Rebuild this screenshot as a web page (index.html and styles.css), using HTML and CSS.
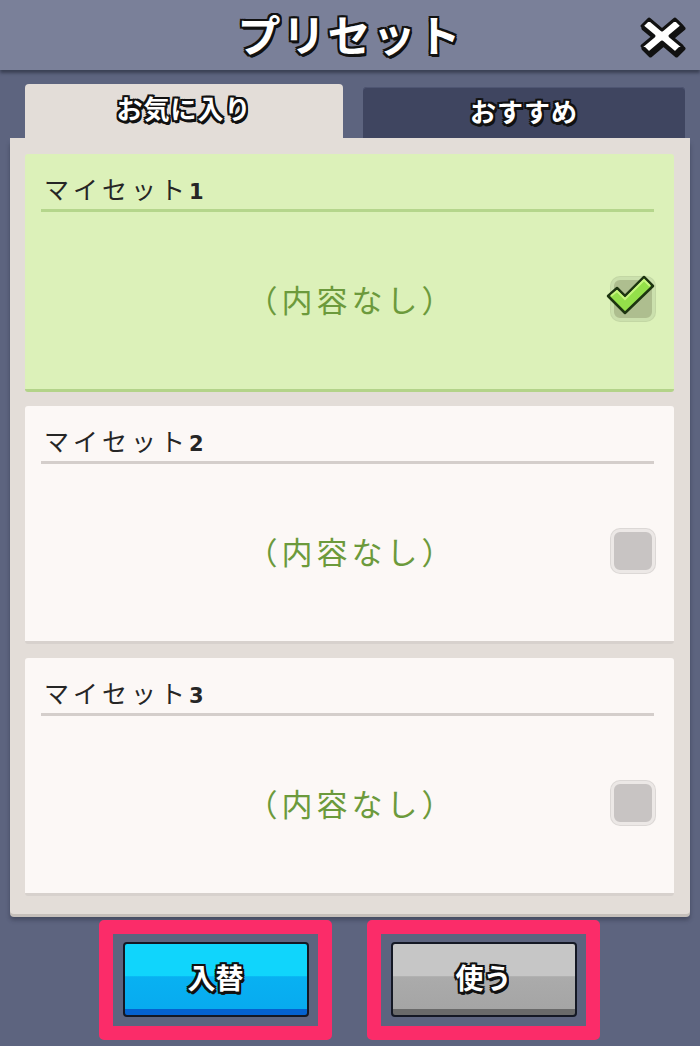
FILE: index.html
```html
<!DOCTYPE html>
<html lang="ja">
<head>
  <meta charset="UTF-8">
  <title>プリセット</title>
  <link rel="stylesheet" href="styles.css">
</head>
<body>

  <header class="topbar">
    <h1 class="outlined">プリセット</h1>
    <button class="close" aria-label="閉じる">
      <svg viewBox="0 0 48 44" width="48" height="44">
        <path d="M11 5 L24 16 L37 5 L44 12 L32 22 L44 32 L37 39 L24 28 L11 39 L4 32 L16 22 L4 12 Z"
              fill="#111" stroke="#111" stroke-width="4" stroke-linejoin="round" transform="translate(1.5 2.5)"/>
        <path d="M11 5 L24 16 L37 5 L44 12 L32 22 L44 32 L37 39 L24 28 L11 39 L4 32 L16 22 L4 12 Z"
              fill="#fff" stroke="#111" stroke-width="3" stroke-linejoin="round"/>
      </svg>
    </button>
  </header>

  <main class="sheet">
    <div class="tabs">
      <div class="tab active"><span class="outlined">お気に入り</span></div>
      <div class="tab"><span class="outlined">おすすめ</span></div>
    </div>

    <div class="panel">
      <section class="preset selected">
        <h2>マイセット<b>1</b></h2>
        <div class="preset-body">
          <p class="empty">（内容なし）</p>
          <span class="check on">
            <svg viewBox="0 0 50 42" width="50" height="42">
              <path d="M3 22 L12 14 L20 22 L39 3 L48 12 L20 39 Z" fill="#94e04a" stroke="#1d3510" stroke-width="2.5" stroke-linejoin="round"/>
              <path d="M6 22 L12 17 L20 25 L39 6 L45 12" fill="none" stroke="#c6f57e" stroke-width="2"/>
            </svg>
          </span>
        </div>
      </section>

      <section class="preset">
        <h2>マイセット<b>2</b></h2>
        <div class="preset-body">
          <p class="empty">（内容なし）</p>
          <span class="check"></span>
        </div>
      </section>

      <section class="preset">
        <h2>マイセット<b>3</b></h2>
        <div class="preset-body">
          <p class="empty">（内容なし）</p>
          <span class="check"></span>
        </div>
      </section>
    </div>

    <div class="actions">
      <div class="mark">
        <button class="btn blue"><span class="outlined">入替</span></button>
      </div>
      <div class="mark">
        <button class="btn gray"><span class="outlined">使う</span></button>
      </div>
    </div>
  </main>

</body>
</html>
```

FILE: styles.css
```css
body {
  margin: 0;
  width: 700px;
  height: 1046px;
  overflow: hidden;
  background-color: #5d647f;
  font-family: "Noto Sans CJK JP", "Noto Sans", sans-serif;
}

.outlined {
  color: #fff;
  font-weight: 700;
  text-shadow:
    -2px -2px 0 #111, 2px -2px 0 #111, -2px 2px 0 #111, 2px 2px 0 #111,
    0 -2px 0 #111, 0 2px 0 #111, -2px 0 0 #111, 2px 0 0 #111,
    1px 3px 0 #111, 2px 3px 0 #111;
}

.topbar {
  height: 70px;
  background-color: #7a8099;
  box-shadow: 0 3px 3px rgba(30, 34, 50, 0.55);
  display: flex;
  align-items: center;
  justify-content: center;
  position: relative;
}

.topbar h1 {
  margin: 0;
  font-size: 43px;
  letter-spacing: 2px;
  line-height: 1;
  padding-bottom: 4px;
}

.close {
  position: absolute;
  right: 14px;
  top: 14px;
  border: none;
  background: none;
  padding: 0;
  line-height: 0;
}

.sheet {
  padding-top: 14px;
}

.tabs {
  display: flex;
  align-items: flex-end;
  gap: 20px;
  margin: 0 15px 0 25px;
  height: 54px;
}

.tab {
  flex: 1;
  height: 51px;
  background-color: #3f4560;
  border-radius: 4px 4px 0 0;
  display: flex;
  align-items: center;
  justify-content: center;
  font-size: 26px;
  line-height: 1;
  box-shadow: inset 0 1px 0 #4e5572;
}

.tab.active {
  flex: 0 0 318px;
  height: 54px;
  background-color: #e3ddd8;
  box-shadow: none;
}

.tab span {
  padding-bottom: 4px;
  letter-spacing: 1px;
}

.tab.active span {
  padding-bottom: 6px;
}

.panel {
  margin: 0 10px;
  background-color: #e3ddd8;
  padding: 16px 16px 18px 15px;
  display: flex;
  flex-direction: column;
  gap: 14px;
  box-shadow: 0 3px 0 #c5bfba, 0 6px 4px rgba(30, 34, 50, 0.4);
  border-radius: 0 0 4px 4px;
}

.preset {
  height: 235px;
  background-color: #fcf8f6;
  border-bottom: 3px solid #d7d1cd;
  border-radius: 3px;
  display: flex;
  flex-direction: column;
}

.preset.selected {
  background-color: #dcf1b9;
  border-bottom-color: #b3d389;
}

.preset h2 {
  margin: 14px 20px 0 16px;
  padding: 0 3px;
  height: 41px;
  line-height: 40px;
  font-size: 25px;
  font-weight: 400;
  color: #262626;
  border-bottom: 3px solid #d4cecb;
  letter-spacing: 4px;
}

.preset.selected h2 {
  border-bottom-color: #b5d68c;
}

.preset h2 b {
  font-family: "DejaVu Sans", sans-serif;
  font-weight: 700;
  font-size: 21px;
}

.preset-body {
  flex: 1;
  display: grid;
  grid-template-columns: 1fr auto 1fr;
  align-items: center;
  padding-bottom: 4px;
}

.empty {
  grid-column: 2;
  margin: 0 0 0 4px;
  font-size: 31px;
  color: #6c9a3c;
  letter-spacing: 4px;
  padding-top: 0;
}

.check {
  grid-column: 3;
  justify-self: end;
  margin-right: 19px;
  width: 38px;
  height: 38px;
  border-radius: 9px;
  background-color: #c8c4c3;
  border: 3px solid #ece8e6;
  box-shadow: 0 0 0 1px #dcd8d6;
  position: relative;
}

.check.on {
  background-color: #aebe8f;
  border-color: #cbe0ad;
  box-shadow: 0 0 0 1px #c3d7a4;
}

.check svg {
  position: absolute;
  left: -9px;
  top: -6px;
}

.actions {
  display: flex;
  justify-content: center;
  gap: 35px;
  padding-top: 6px;
  margin-left: -2px;
}

.mark {
  border: 14px solid #fb2c69;
  border-radius: 5px;
  padding: 8px 9px 9px 10px;
}

.btn {
  width: 186px;
  height: 75px;
  border: 2px solid #141824;
  border-radius: 4px;
  font-family: inherit;
  font-size: 28px;
  padding: 0 0 6px;
  cursor: pointer;
  display: flex;
  align-items: center;
  justify-content: center;
}

.btn.blue {
  background: linear-gradient(#10d5fc 0, #10d5fc 45%, #08b1f2 46%, #08abef 91%, #0562d0 91%);
}

.btn.gray {
  background: linear-gradient(#c6c6c6 0, #c6c6c6 45%, #ababab 46%, #a5a5a5 91%, #6a6a6a 91%);
}
```
